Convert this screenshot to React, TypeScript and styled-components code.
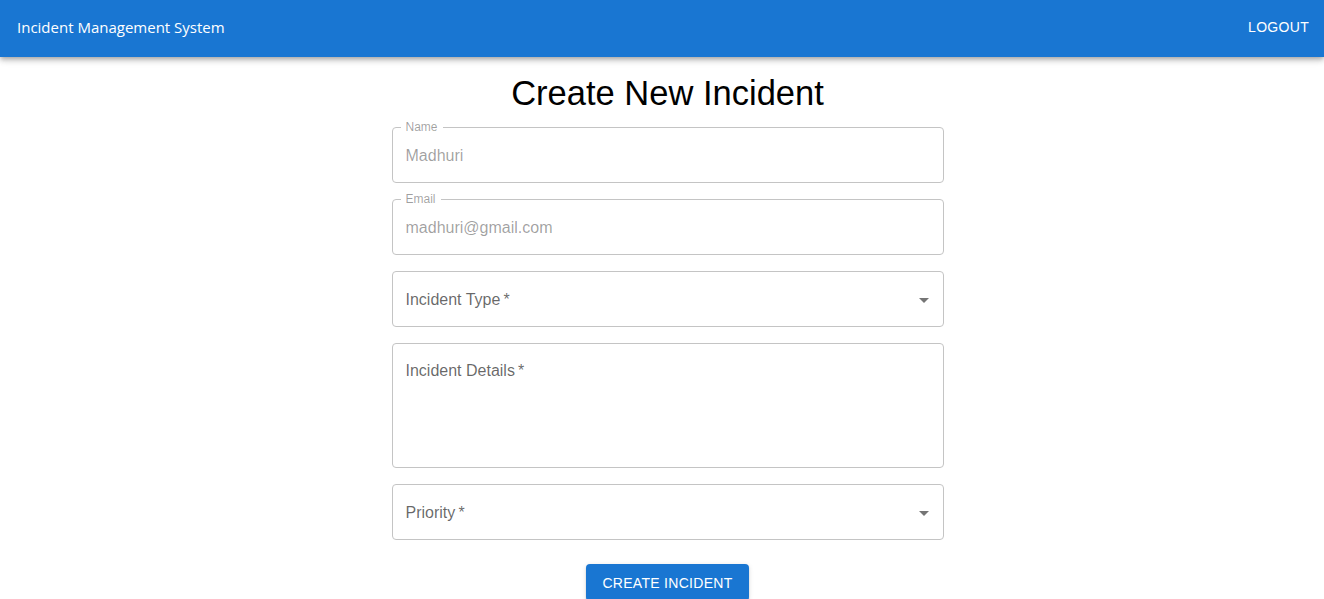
import React from 'react'
import styled, { createGlobalStyle } from 'styled-components'

const GlobalStyle = createGlobalStyle`
  body {
    margin: 0;
    background: #fff;
    font-family: "Liberation Sans", Arial, sans-serif;
  }
`

const AppBar = styled.header`
  height: 57px;
  background: #1976d2;
  color: #fff;
  display: flex;
  align-items: center;
  justify-content: space-between;
  padding: 0 15px 0 17px;
  box-shadow: 0 2px 4px -1px rgba(0, 0, 0, 0.2), 0 4px 5px 0 rgba(0, 0, 0, 0.14),
    0 1px 10px 0 rgba(0, 0, 0, 0.12);
  position: relative;
  z-index: 1;
`

const Brand = styled.div`
  font-family: "Open Sans", "Noto Sans", sans-serif;
  font-size: 15px;
  margin-top: -3px;
`

const LogoutButton = styled.button`
  background: none;
  border: none;
  color: #fff;
  font-family: "Liberation Sans", Arial, sans-serif;
  font-size: 14px;
  letter-spacing: 0.3px;
  text-transform: uppercase;
  padding: 0;
  margin-top: -4px;
  cursor: pointer;
`

const Main = styled.main`
  display: flex;
  flex-direction: column;
  align-items: center;
  padding-left: 11px;
`

const Title = styled.h1`
  font-size: 34.5px;
  font-weight: 400;
  margin: 16px 0 14px;
  line-height: 40px;
  color: #000;
`

const Form = styled.form`
  width: 552px;
  display: flex;
  flex-direction: column;
  gap: 16px;
`

const Field = styled.div<{ $tall?: boolean }>`
  position: relative;
  height: ${(p) => (p.$tall ? '125px' : '56px')};
  border: 1px solid #c4c4c4;
  border-radius: 4px;
  box-sizing: border-box;
  display: flex;
  align-items: ${(p) => (p.$tall ? 'flex-start' : 'center')};
  padding: ${(p) => (p.$tall ? '18px 13px' : '1px 13px 0')};
`

const FloatLabel = styled.span`
  position: absolute;
  top: -7px;
  left: 8px;
  padding: 0 5px;
  background: #fff;
  font-size: 12px;
  line-height: 12px;
  color: rgba(0, 0, 0, 0.38);
`

const Value = styled.span<{ $disabled?: boolean }>`
  font-size: 16px;
  color: ${(p) => (p.$disabled ? 'rgba(0, 0, 0, 0.38)' : 'rgba(0, 0, 0, 0.6)')};
  flex: 1;
`

const Arrow = styled.svg`
  width: 24px;
  height: 24px;
  fill: rgba(0, 0, 0, 0.54);
  margin-right: -6px;
`

const Actions = styled.div`
  display: flex;
  justify-content: center;
  margin-top: 8px;
`

const SubmitButton = styled.button`
  background: #1976d2;
  color: #fff;
  border: none;
  border-radius: 4px;
  font-family: "Liberation Sans", Arial, sans-serif;
  font-size: 14px;
  letter-spacing: 0.3px;
  text-transform: uppercase;
  height: 37px;
  padding: 0 16px;
  box-shadow: 0 3px 1px -2px rgba(0, 0, 0, 0.2), 0 2px 2px 0 rgba(0, 0, 0, 0.14),
    0 1px 5px 0 rgba(0, 0, 0, 0.12);
  cursor: pointer;
`

const DropArrow = () => (
  <Arrow viewBox="0 0 24 24">
    <path d="M7 10l5 5 5-5z" />
  </Arrow>
)

export default function App() {
  return (
    <>
      <GlobalStyle />
      <AppBar>
        <Brand>Incident Management System</Brand>
        <LogoutButton>Logout</LogoutButton>
      </AppBar>
      <Main>
        <Title>Create New Incident</Title>
        <Form onSubmit={(e) => e.preventDefault()}>
          <Field>
            <FloatLabel>Name</FloatLabel>
            <Value $disabled>Madhuri</Value>
          </Field>
          <Field>
            <FloatLabel>Email</FloatLabel>
            <Value $disabled>madhuri@gmail.com</Value>
          </Field>
          <Field>
            <Value>Incident Type&thinsp;*</Value>
            <DropArrow />
          </Field>
          <Field $tall>
            <Value>Incident Details&thinsp;*</Value>
          </Field>
          <Field>
            <Value>Priority&thinsp;*</Value>
            <DropArrow />
          </Field>
          <Actions>
            <SubmitButton type="submit">Create Incident</SubmitButton>
          </Actions>
        </Form>
      </Main>
    </>
  )
}
